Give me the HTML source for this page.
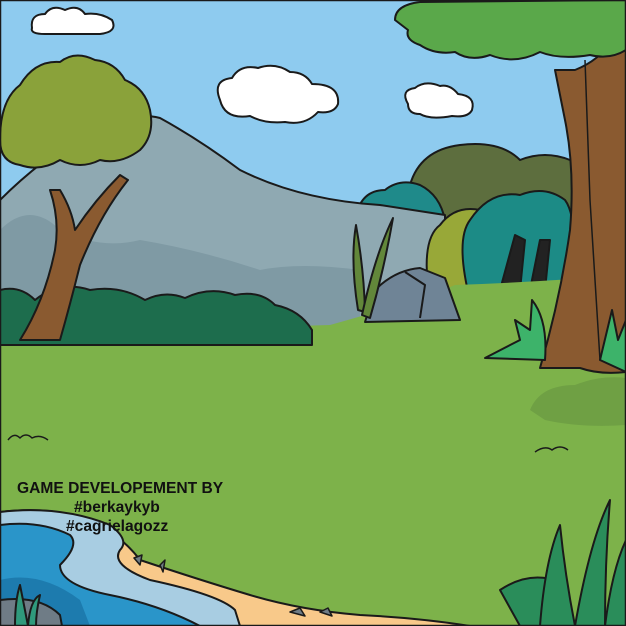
<!DOCTYPE html>
<html><head><meta charset="utf-8"><style>
html,body{margin:0;padding:0;width:626px;height:626px;overflow:hidden;background:#8ecbef}
.t{position:absolute;font-family:"Liberation Sans",sans-serif;font-weight:bold;font-size:15.6px;color:#111;white-space:nowrap}
</style></head><body>
<svg width="626" height="626" viewBox="0 0 626 626" style="position:absolute;left:0;top:0" stroke="#1a1a1a" stroke-width="2" stroke-linejoin="round">
<rect x="0" y="0" width="626" height="626" fill="#8ecbef" stroke="none"/>
<path d="M32 28 Q30 14 45 14 Q52 4 65 10 Q78 4 85 14 Q100 12 112 20 Q118 32 100 34 L45 34 Q30 34 32 28Z" fill="#fff"/>
<path d="M220 100 Q212 80 232 78 Q240 64 258 68 Q275 62 290 72 Q305 72 312 84 Q340 84 338 104 Q334 114 318 112 Q305 126 285 122 Q265 124 250 116 Q225 120 220 100Z" fill="#fff"/>
<path d="M408 104 Q400 90 415 88 Q425 80 440 86 Q450 84 458 94 Q476 96 472 110 Q468 118 452 116 Q430 120 420 114 Q408 114 408 104Z" fill="#fff"/>
<path d="M395 215 Q380 190 410 185 Q420 150 460 145 Q500 140 520 160 Q545 150 570 160 L626 155 L626 330 L395 330Z" fill="#5d6e3e"/>
<path d="M355 220 Q360 190 385 190 Q400 178 420 185 Q440 195 445 220Z" fill="#1f8a8a"/>
<path d="M0 200 Q40 160 90 130 Q130 110 160 118 Q200 140 240 170 Q300 200 380 205 L445 215 L445 330 L0 330Z" fill="#8fa9b2"/>
<path d="M0 230 Q30 200 60 230 Q100 250 140 240 Q200 250 260 270 Q300 262 360 270 L360 330 L0 330Z" fill="#7f9aa4" stroke="none"/>
<path d="M430 300 Q420 240 440 225 Q455 205 480 210 Q505 210 515 235 L530 300Z" fill="#98a838"/>
<path d="M470 300 Q455 240 470 220 Q490 190 520 195 Q545 185 565 200 Q580 220 570 300Z" fill="#1c8b86"/>
<path d="M500 290 L515 235 L525 240 L520 290Z M530 290 L540 240 L550 240 L545 290Z" fill="#222"/>
<path d="M605 160 Q626 155 626 160 L626 300 L605 300Z" fill="#1f8a8a"/>
<path d="M0 340 Q150 330 330 325 Q420 300 455 285 Q540 282 626 275 L626 626 L0 626Z" fill="#7db24a" stroke="none"/>
<path d="M0 290 Q20 285 35 300 Q60 280 90 290 Q120 285 145 300 Q165 290 185 298 Q210 286 235 295 Q260 290 275 305 Q300 310 312 330 L312 345 L0 345Z" fill="#1d6d4d"/>
<path d="M365 322 L375 290 Q395 270 420 268 L445 278 L460 320Z" fill="#6f8496"/>
<path d="M405 272 L425 285 L420 318" fill="none"/>
<path d="M358 310 Q350 260 356 225 Q364 270 365 312Z" fill="#62873a"/>
<path d="M362 315 Q375 255 393 218 Q384 270 370 318Z" fill="#62873a"/>
<path d="M20 340 Q45 300 55 250 Q60 220 50 190 L60 190 Q72 210 75 230 Q95 200 120 175 L128 180 Q100 215 80 265 Q70 305 60 340Z" fill="#8a5a30"/>
<path d="M0 140 Q0 100 20 85 Q35 60 60 62 Q75 50 95 60 Q115 62 125 80 Q145 88 150 110 Q155 135 140 150 Q120 165 100 160 Q80 170 60 160 Q40 172 20 165 Q0 162 0 140Z" fill="#8aa23a"/>
<path d="M540 368 Q560 300 570 230 Q575 170 565 120 L555 70 L575 70 Q600 60 612 40 L626 40 L626 372 Q600 375 580 368Z" fill="#8a5a30"/>
<path d="M585 60 L590 200 L600 360" fill="none" stroke-width="1.5"/>
<path d="M395 20 Q395 5 420 2 L626 0 L626 50 Q610 60 590 55 Q560 60 540 52 Q515 65 490 55 Q470 62 455 52 Q435 55 420 45 Q405 40 408 30Z" fill="#5aa84a"/>
<path d="M485 358 Q510 345 520 340 L515 320 L530 330 L532 300 Q548 320 545 360 L485 358Z" fill="#3db36a"/>
<path d="M600 360 L612 310 L618 340 L626 320 L626 372Z" fill="#3db36a"/>
<path d="M530 410 Q540 385 575 385 Q600 375 626 378 L626 425 Q580 428 545 420Z" fill="#6fa044" stroke="none"/>
<path d="M0 512 Q60 505 100 525 Q125 540 140 560 Q200 580 250 595 Q300 610 360 615 Q420 618 470 626 L0 626Z" fill="#f8c98a"/>
<path d="M0 512 Q60 505 110 525 Q130 540 120 550 Q110 565 150 580 Q220 595 235 610 L240 626 L0 626Z" fill="#a8cde2"/>
<path d="M0 525 Q40 520 70 535 Q80 545 60 565 Q60 585 110 595 Q160 605 200 626 L0 626Z" fill="#2a95c9"/>
<path d="M0 580 Q40 570 80 600 L90 626 L0 626Z" fill="#1d7bae" stroke="none"/>
<path d="M0 600 Q40 595 60 615 L62 626 L0 626Z" fill="#6f7c86"/>
<path d="M15 626 Q15 600 20 585 Q25 610 28 626Z M28 626 Q30 600 40 595 Q36 612 36 626Z" fill="#2f9a7c"/>
<path d="M134 558 L142 555 L140 565Z M160 565 L165 560 L163 572Z M290 612 L300 608 L305 616Z M320 612 L328 608 L332 616Z" fill="#6f7c86" stroke-width="1.5"/>
<path d="M500 590 Q530 570 560 582 L570 626 L520 626Z" fill="#2a8d5a"/>
<path d="M540 626 Q545 560 560 525 Q565 575 575 626Z" fill="#2a8d5a"/>
<path d="M575 626 Q590 540 610 500 Q605 560 605 626Z" fill="#2a8d5a"/>
<path d="M605 626 Q612 570 626 540 L626 626Z" fill="#2a8d5a"/>
<path d="M8 440 Q14 432 20 438 Q26 432 32 438 Q40 434 48 440" fill="none" stroke-width="1.5"/>
<path d="M535 452 Q545 445 552 450 Q560 444 568 450" fill="none" stroke-width="1.5"/>
<rect x="0.5" y="0.5" width="625" height="625" fill="none" stroke="#1a1a1a" stroke-width="1.5"/>
</svg>
<div class="t" style="left:17px;top:480px">GAME DEVELOPEMENT BY</div>
<div class="t" style="left:74px;top:499px">#berkaykyb</div>
<div class="t" style="left:66px;top:518px">#cagrielagozz</div>
</body></html>
